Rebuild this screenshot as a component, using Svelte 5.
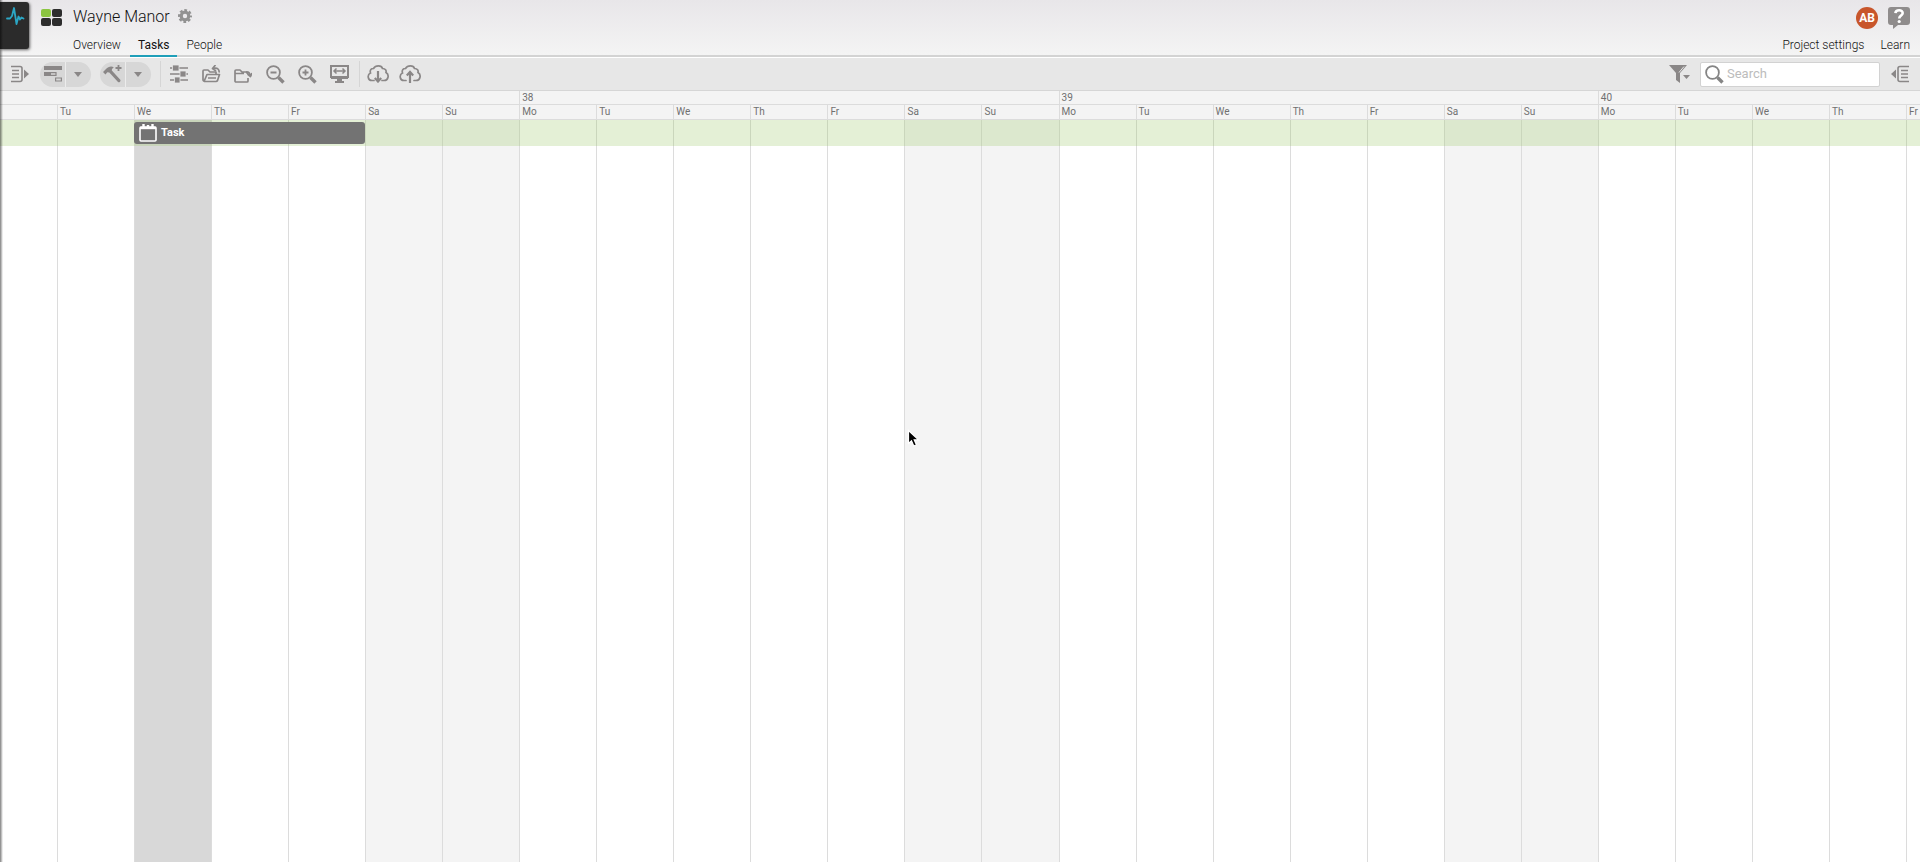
<script lang="ts">
  type Day = { name: string; week?: number; off?: boolean; today?: boolean };

  const names = ['Mo', 'Tu', 'We', 'Th', 'Fr', 'Sa', 'Su'];
  const firstWeek = 37;

  // starts on the Tuesday of the first week
  const days: Day[] = Array.from({ length: 25 }, (_, i) => {
    const n = i + 1;
    const weekday = n % 7;
    return {
      name: names[weekday],
      week: weekday === 0 ? firstWeek + n / 7 : undefined,
      off: weekday > 4,
      today: i === 1,
    };
  });

  const tabs = ['Overview', 'Tasks', 'People'];
  let activeTab = $state('Tasks');
  let query = $state('');
</script>

{#snippet caret()}
  <svg width="8" height="5" viewBox="0 0 8 5" aria-hidden="true"><path d="M0 0h8L4 5z" fill="currentColor" /></svg>
{/snippet}

<div class="app">
  <header>
    <button type="button" class="pulse" aria-label="Activity">
      <svg width="20" height="20" viewBox="0 0 20 20" fill="none" stroke="#2ba6c4" stroke-width="1.8" stroke-linejoin="round" stroke-linecap="round">
        <path d="M2 12.500h3L7 10 9 2l2.500 16 2-7.500 1.500 3 1.500-2 2 1" />
      </svg>
    </button>

    <svg class="logo" width="22" height="18" viewBox="0 0 22 18" aria-hidden="true">
      <rect width="10" height="8" rx="2" fill="#8bc540" />
      <rect x="11" width="10" height="8" rx="2" fill="#2d2d2d" />
      <rect y="9" width="10" height="8" rx="2" fill="#2d2d2d" />
      <rect x="11" y="9" width="10" height="8" rx="2" fill="#2d2d2d" />
    </svg>

    <div class="project">
      <div class="title">
        <h1>Wayne Manor</h1>
        <button type="button" aria-label="Project options">
          <svg width="14" height="14" viewBox="0 0 14 14" fill="none" stroke="#929292">
            <circle cx="7" cy="7" r="3.8" stroke-width="3.2" />
            <circle cx="7" cy="7" r="5.8" stroke-width="2.4" stroke-dasharray="2.7 1.855" stroke-dashoffset="1.350" />
          </svg>
        </button>
      </div>
      <nav>
        {#each tabs as tab}
          <a href="#{tab.toLowerCase()}" class:active={activeTab === tab} onclick={() => (activeTab = tab)}>{tab}</a>
        {/each}
      </nav>
    </div>

    <div class="account">
      <div class="user">
        <button type="button" class="avatar">AB</button>
        <button type="button" aria-label="Help">
          <svg width="22" height="22" viewBox="0 0 22 22">
            <path d="M3 0h16q3 0 3 3v12q0 3-3 3h-9l-5 4v-4H3q-3 0-3-3V3q0-3 3-3z" fill="#8f8c8c" />
            <path d="M7.400 6.200c.400-4.200 7.400-3.800 7.300-.100 0 2.400-3.300 2.600-3.500 5.400" fill="none" stroke="#fff" stroke-width="2.600" />
            <circle cx="11.200" cy="14.500" r="1.600" fill="#fff" />
          </svg>
        </button>
      </div>
      <div class="links">
        <a href="#settings">Project settings</a>
        <a href="#learn">Learn</a>
      </div>
    </div>
  </header>

  <div class="toolbar">
    <button type="button" class="tool edge" aria-label="Show left panel">
      <svg width="18" height="18" viewBox="0 0 18 18" fill="none" stroke="currentColor">
        <path d="M0 1.500h9q2 0 2 2v11q0 2-2 2H0M1 5.500h7M1 9h7M1 12.500h7" stroke-width="1.600" />
        <path d="M13 4.500l5 4.500-5 4.500z" fill="currentColor" stroke="none" />
      </svg>
    </button>

    <div class="split">
      <button type="button" aria-label="Add task">
        <svg width="18" height="16" viewBox="0 0 18 16">
          <path d="M0 0h18v4H0zM0 6h7v4H0z" fill="currentColor" />
          <path d="M6 6.600h6v2.800H6zM11.600 12h5.800v3h-5.800z" fill="none" stroke="currentColor" stroke-width="1.200" />
        </svg>
      </button>
      <button type="button" aria-label="Task types">{@render caret()}</button>
    </div>

    <div class="split">
      <button type="button" aria-label="Build">
        <svg width="19" height="18" viewBox="0 0 19 18">
          <path d="M0 7l2.500 2.500 1.800-2.200 2 .200 8.700 9.500q1 .800 2-.200t.300-2L8.800 5.600 9 4l1.800-1.800C8 .800 5 1.800 3 4z" fill="currentColor" />
          <path d="M15.500 0v6M12.500 3h6" stroke="currentColor" stroke-width="1.800" />
        </svg>
      </button>
      <button type="button" aria-label="Build options">{@render caret()}</button>
    </div>

    <div class="group">
      <button type="button" class="tool" aria-label="Settings">
        <svg width="18" height="18" viewBox="0 0 18 18">
          <path d="M0 3h18M0 9h18M0 15h18" stroke="currentColor" stroke-width="1.600" />
          <path d="M2.500 0h6.500v6H2.500zM10 6h6v6h-6zM4.500 12H10v6H4.500z" fill="currentColor" stroke="#e7e7e7" stroke-width=".800" />
        </svg>
      </button>
      <button type="button" class="tool" aria-label="Open folder">
        <svg width="19" height="18" viewBox="0 0 19 18" fill="none" stroke="currentColor" stroke-width="1.700" stroke-linejoin="round">
          <path d="M2 16.500L1 15V6q0-1 1-1h4l2 2h6v2.500M2 16.500L5 9.500h12.500L15.500 15.500q-.500 1-1.500 1H2M6 13h8" />
          <path d="M11 3.500q3.500-1 5 .500T17 7.500M13.500 0L10.500 3.500l3.500 2.500" />
        </svg>
      </button>
      <button type="button" class="tool" aria-label="Move to folder">
        <svg width="18" height="18" viewBox="0 0 18 18" fill="none" stroke="currentColor" stroke-width="1.700" stroke-linejoin="round">
          <path d="M14 13v3q0 1-1 1H2q-1 0-1-1V6q0-1 1-1h4l2 2h4l2 2M1 8.500h9" />
          <path d="M12 7q4-.500 4 3.500M13.500 9l3 2.500L18 8" />
        </svg>
      </button>
      <button type="button" class="tool" aria-label="Zoom out">
        <svg width="19" height="19" viewBox="0 0 19 19" fill="none" stroke="currentColor">
          <circle cx="7.500" cy="7.500" r="6.400" stroke-width="1.800" />
          <path d="M4.500 7.500h6" stroke-width="2" />
          <path d="M12.500 12.500l5 5" stroke-width="3.400" />
        </svg>
      </button>
      <button type="button" class="tool" aria-label="Zoom in">
        <svg width="19" height="19" viewBox="0 0 19 19" fill="none" stroke="currentColor">
          <circle cx="7.500" cy="7.500" r="6.400" stroke-width="1.800" />
          <path d="M4.500 7.500h6M7.500 4.500v6" stroke-width="1.800" />
          <path d="M12.500 12.500l5 5" stroke-width="3.400" />
        </svg>
      </button>
      <button type="button" class="tool" aria-label="Fit to screen">
        <svg width="19" height="18" viewBox="0 0 19 18">
          <path d="M1 1h17v11H1z" fill="none" stroke="currentColor" stroke-width="2" />
          <path d="M1 11h17v3H1zM7 14h5v2h2v2H5v-2h2z" fill="currentColor" />
          <path d="M4.500 6h10M6.500 3.500L4 6l2.500 2.500M12.500 3.500L15 6l-2.500 2.500" fill="none" stroke="currentColor" stroke-width="1.500" />
        </svg>
      </button>
    </div>

    <div class="group">
      <button type="button" class="tool" aria-label="Download">
        <svg width="22" height="18" viewBox="0 0 22 18" fill="none" stroke="currentColor" stroke-width="1.700" stroke-linecap="round">
          <path d="M7 15.500H5C.500 15.500 0 9.500 3.500 8 2.500 5 4.500 3.300 6.500 3.500 8.500 0 14.500 0 15.500 3.500c3 0 4 2 3.500 4C22.500 9.500 21.500 15.500 17 15.500h-2" />
          <path d="M11 6v9M7.800 13l3.200 3.500 3.200-3.500" stroke-width="2.200" stroke-linecap="butt" />
        </svg>
      </button>
      <button type="button" class="tool" aria-label="Upload">
        <svg width="22" height="18" viewBox="0 0 22 18" fill="none" stroke="currentColor" stroke-width="1.700" stroke-linecap="round">
          <path d="M7 15.500H5C.500 15.500 0 9.500 3.500 8 2.500 5 4.500 3.300 6.500 3.500 8.500 0 14.500 0 15.500 3.500c3 0 4 2 3.500 4C22.500 9.500 21.500 15.500 17 15.500h-2" />
          <path d="M11 18V8M7.800 10.500L11 7l3.200 3.500" stroke-width="2.200" stroke-linecap="butt" />
        </svg>
      </button>
    </div>

    <div class="right">
      <button type="button" class="tool filter" aria-label="Filter">
        <svg width="22" height="18" viewBox="0 0 22 18" fill="currentColor">
          <path d="M0 0h18l-7 8v10l-4-3V8z" />
          <path d="M15 1.500L10 7.500" stroke="#e7e7e7" stroke-width="1" />
          <path d="M14 10h7l-3.500 4z" />
        </svg>
      </button>
      <label class="search">
        <svg width="19" height="19" viewBox="0 0 19 19" fill="none" stroke="#858585" aria-hidden="true">
          <circle cx="7.500" cy="7.500" r="6.400" stroke-width="1.800" />
          <path d="M12.500 12.500l5 5" stroke-width="3.400" />
        </svg>
        <input type="text" bind:value={query} placeholder="Search" aria-label="Search" />
      </label>
      <button type="button" class="tool edge" aria-label="Show right panel">
        <svg width="18" height="18" viewBox="0 0 18 18" fill="none" stroke="currentColor">
          <path d="M18 1.500H9q-2 0-2 2v11q0 2 2 2h9M10 5.500h7M10 9h7M10 12.500h7" stroke-width="1.600" />
          <path d="M5 4.500L0 9l5 4.500z" fill="currentColor" stroke="none" />
        </svg>
      </button>
    </div>
  </div>

  <main>
    <div class="row weeks">
      <div></div>
      {#each days as day}
        <div class:start={day.week}>{day.week ?? ''}</div>
      {/each}
    </div>
    <div class="row names">
      <div></div>
      {#each days as day}
        <div class="start">{day.name}</div>
      {/each}
    </div>
    <div class="row chart">
      <div class="cell"></div>
      {#each days as day}
        <div class="cell start" class:off={day.off} class:today={day.today}></div>
      {/each}
      <div class="row lane">
        <button type="button" class="task">
          <svg width="18" height="18" viewBox="0 0 18 18" fill="none" stroke="#fff" aria-hidden="true">
            <rect x="1" y="3" width="16" height="14" rx="1" stroke-width="1.600" />
            <path d="M1 4h16" stroke-width="2.400" />
            <path d="M4.500 0v4M9 1v3M13.500 0v4" stroke-width="2.400" />
          </svg>
          Task
        </button>
      </div>
    </div>
  </main>

  <svg class="cursor" width="14" height="20" viewBox="0 0 14 20" aria-hidden="true">
    <path d="M1.500 1.500v13l3-2.700 2.300 5.200 2.600-1.200-2.200-5h4.300z" fill="#000" stroke="#fff" stroke-width="1.200" />
  </svg>
</div>

<style>
  :global(body) {
    margin: 0;
  }
  .app {
    position: relative;
    display: flex;
    flex-direction: column;
    min-height: 100vh;
    overflow: hidden;
    background: #fff;
    color: #444;
    font: 400 12px/16px Roboto, sans-serif;
  }
  .app::after {
    content: '';
    position: absolute;
    inset: 0 auto 0 0;
    width: 3px;
    background: linear-gradient(to right, rgb(0 0 0 / 50%), transparent);
    pointer-events: none;
  }
  button {
    display: flex;
    align-items: center;
    justify-content: center;
    padding: 0;
    border: 0;
    background: none;
    color: inherit;
    font: inherit;
    cursor: pointer;
  }
  a {
    color: inherit;
    text-decoration: none;
  }
  svg {
    flex: none;
  }

  header {
    display: flex;
    align-items: flex-start;
    height: 55px;
    border-bottom: 2px solid #d3d3d3;
    background: linear-gradient(#e8e6e9, #f4f4f4);
  }
  .pulse {
    align-items: flex-start;
    box-sizing: border-box;
    width: 29px;
    height: 47px;
    margin-top: 2px;
    padding: 4px 0 0;
    border-radius: 0 3px 3px 0;
    background: #2b2b2b;
    box-shadow: 1px 1px 3px rgb(0 0 0 / 60%);
  }
  .logo {
    margin: 9px 10px 0 12px;
  }
  .project {
    display: flex;
    flex-direction: column;
  }
  .title {
    display: flex;
    align-items: center;
    gap: 8px;
    height: 34px;
  }
  .title button {
    margin-bottom: 2px;
  }
  h1 {
    margin: 0;
    color: #111;
    font-size: 16px;
    font-weight: 300;
    line-height: 24px;
  }
  nav {
    display: flex;
    gap: 1px;
    margin-left: -8px;
    font-weight: 300;
  }
  nav a {
    padding: 3px 8px 2px;
    border-bottom: 2px solid transparent;
    color: #111;
  }
  nav a.active {
    border-color: #1f9fb9;
    font-weight: 400;
  }
  .account {
    display: flex;
    flex-direction: column;
    align-items: flex-end;
    margin-left: auto;
    padding-right: 10px;
  }
  .user {
    display: flex;
    align-items: center;
    gap: 10px;
    height: 35px;
    margin-bottom: 2px;
  }
  .avatar {
    width: 22px;
    height: 22px;
    border-radius: 50%;
    background: #c8562b;
    color: #fff;
    font-weight: 700;
  }
  .links {
    display: flex;
    gap: 16px;
    color: #111;
    font-weight: 300;
  }

  .toolbar {
    display: flex;
    align-items: center;
    height: 32px;
    border-top: 1px solid #fff;
    border-bottom: 1px solid #d6d6d6;
    background: #e7e7e7;
    color: #8a8787;
  }
  .tool {
    width: 32px;
    height: 26px;
  }
  .edge {
    width: 40px;
  }
  .split {
    display: flex;
    margin-right: 9px;
    border-radius: 13px;
    background: #d7d7d7;
  }
  .split button {
    box-sizing: border-box;
    width: 25px;
    height: 25px;
    padding-right: 2px;
  }
  .split button:first-child {
    width: 26px;
    padding: 0;
    border-right: 1px solid #ececec;
  }
  .group {
    display: flex;
    border-left: 1px solid #d5d5d5;
    padding: 0 4px 0 2px;
  }
  .right {
    display: flex;
    align-items: center;
    margin-left: auto;
  }
  .filter {
    margin-right: 4px;
  }
  .search {
    display: flex;
    align-items: center;
    gap: 3px;
    box-sizing: border-box;
    width: 180px;
    height: 25px;
    padding: 0 4px;
    border: 1px solid #d2d2d2;
    border-radius: 2px;
    background: #fff;
  }
  input {
    min-width: 0;
    flex: 1;
    padding: 0;
    border: 0;
    outline: 0;
    background: none;
    color: #555;
    font: 400 13px/18px Roboto, sans-serif;
  }
  input::placeholder {
    color: #bcbcbc;
  }

  main {
    display: flex;
    flex: 1;
    flex-direction: column;
  }
  .row {
    display: grid;
    grid-template-columns: 57px repeat(24, 1fr) 14px;
  }
  .weeks,
  .names {
    height: 13px;
    border-bottom: 1px solid #dcdcdc;
    background: #f4f4f4;
    color: #707070;
    font-size: 10px;
    line-height: 14px;
  }
  .names {
    height: 14px;
  }
  .weeks > div,
  .names > div {
    min-width: 0;
    padding-left: 2px;
  }
  .start {
    border-left: 1px solid #dcdcdc;
  }
  .chart {
    position: relative;
    flex: 1;
  }
  .cell.off {
    background: #f4f4f4;
  }
  .cell.today {
    background: #d8d8d8;
  }
  .lane {
    position: absolute;
    inset: 0 0 auto;
    height: 26px;
    background: rgb(158 200 108 / 28%);
  }
  .task {
    grid-column: 3 / span 3;
    justify-content: flex-start;
    gap: 4px;
    height: 22px;
    margin-top: 2px;
    padding-left: 5px;
    border-radius: 3px;
    background: #737373;
    color: #fff;
    font-size: 11px;
    font-weight: 700;
  }
  .cursor {
    position: absolute;
    top: 429px;
    left: 907px;
    pointer-events: none;
  }
</style>
